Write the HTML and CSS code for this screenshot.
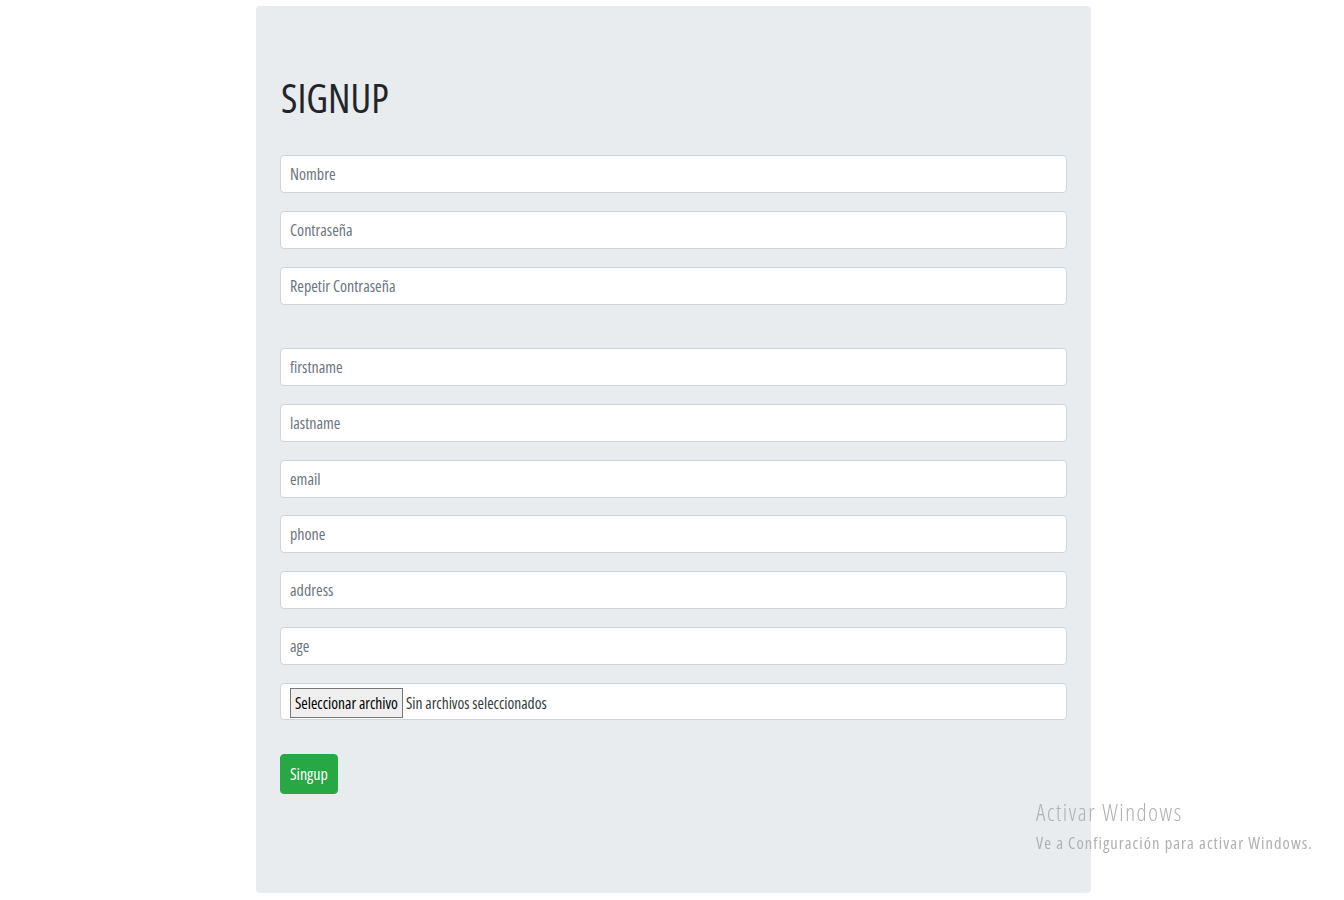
FILE: index.html
```html
<!DOCTYPE html>
<html lang="es">
<head>
<meta charset="utf-8">
<title>Signup</title>
<link rel="stylesheet" href="styles.css">
</head>
<body>
<main class="container">
  <section class="jumbotron">
    <h1 class="title">SIGNUP</h1>
    <form class="form">
      <div class="group"><input class="field" type="text" placeholder="Nombre"></div>
      <div class="group"><input class="field" type="password" placeholder="Contraseña"></div>
      <div class="group"><input class="field" type="password" placeholder="Repetir Contraseña"></div>
      <div class="group group-gap"><input class="field" type="text" placeholder="firstname"></div>
      <div class="group"><input class="field" type="text" placeholder="lastname"></div>
      <div class="group"><input class="field" type="text" placeholder="email"></div>
      <div class="group"><input class="field" type="text" placeholder="phone"></div>
      <div class="group"><input class="field" type="text" placeholder="address"></div>
      <div class="group"><input class="field" type="text" placeholder="age"></div>
      <div class="group"><div class="field file"><span class="file-btn">Seleccionar archivo</span><span class="file-text">Sin archivos seleccionados</span></div></div>
      <button class="btn" type="button">Singup</button>
    </form>
  </section>
</main>
<div class="watermark">
  <div class="wm-title">Activar Windows</div>
  <div class="wm-sub">Ve a Configuración para activar Windows.</div>
</div>
</body>
</html>
```
FILE: styles.css
```css
* { box-sizing: border-box; }
html, body { margin: 0; padding: 0; background: #fff; }
body {
  font-family: "Open Sans", "Liberation Sans Narrow", "DejaVu Sans Condensed", sans-serif;
  font-stretch: 75%;
  color: #212529;
  padding: 6px 0 0 256px;
}
.container {
  width: 835px;
}
.jumbotron {
  background: #e9ecef;
  border-radius: 4px;
  padding: 64px 24px 99px;
}
.title {
  margin: 0 0 37px;
  padding-top: 4px;
  height: 48px;
  font-size: 40px;
  line-height: 48px;
  font-weight: 500;
  color: #212529;
  position: relative;
  left: 1px;
}
.form { margin: 0; }
.group { margin-bottom: 17.9px; }
.group-gap { margin-top: 43px; }
.field {
  display: block;
  width: 100%;
  height: 38px;
  padding: 0 9px;
  border: 1px solid #ced4da;
  border-radius: 4px;
  background: #fff;
  font-family: inherit;
  font-stretch: 75%;
  font-size: 16px;
  color: #495057;
}
.field::placeholder { color: #6c757d; opacity: 1; }
.file {
  display: flex;
  align-items: flex-end;
  height: 37px;
  padding: 0 9px 1px;
  color: #212529;
}
.file-btn {
  display: inline-block;
  height: 30px;
  line-height: 28px;
  padding: 0 4px;
  background: #efefef;
  border: 1px solid #767676;
  font-size: 15.5px;
  font-weight: 400;
  color: #000;
}
.file-text {
  line-height: 30px;
  padding-left: 3px;
  font-size: 15.5px;
  font-weight: 400;
  color: #343a40;
}
.btn {
  display: block;
  margin-top: 34px;
  height: 40px;
  padding: 0 9px;
  border: 1px solid #28a745;
  border-radius: 4px;
  background: #28a745;
  color: #fff;
  font-family: inherit;
  font-stretch: 75%;
  font-size: 16px;
}
.watermark {
  position: fixed;
  left: 1036px;
  top: 797px;
  color: #b0b0b0;
  font-family: "Open Sans", sans-serif;
  font-stretch: 75%;
}
.wm-title { font-size: 23px; line-height: 30px; font-weight: 300; letter-spacing: 1.6px; }
.wm-sub { font-size: 16.5px; line-height: 22px; margin-top: 5px; font-weight: 400; letter-spacing: 1.05px; }
```
